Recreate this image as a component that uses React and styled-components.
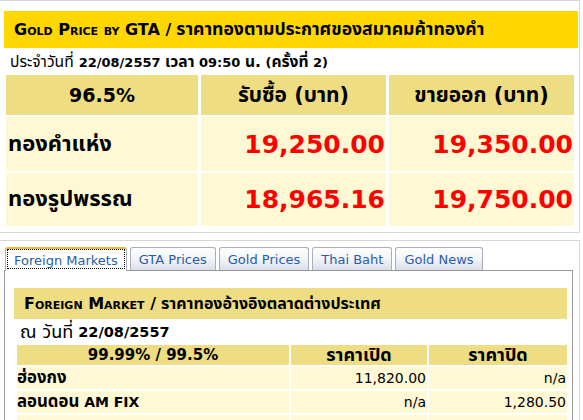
import styled, { createGlobalStyle } from 'styled-components';

const GlobalStyle = createGlobalStyle`
  body {
    margin: 0;
    background: #fff;
    color: #000;
    font-family: Tahoma, "DejaVu Sans", "Noto Sans Thai", "Noto Sans", sans-serif;
    font-size: 13px;
  }
`;

// the Thai fallback face draws small next to the Latin one, so Thai runs get a bump
const Th = styled.span`
  font-size: ${(p) => p.$scale || '1.2em'};
  font-variant: normal;
`;

const Page = styled.div`
  width: 583px;
  height: 420px;
  overflow: hidden;
`;

const Box = styled.div`
  box-sizing: border-box;
  width: 580px;
  height: ${(p) => p.$height};
  border: 1px solid #d6d6d6;
  border-left: none;
  padding: ${(p) => p.$pad};
  margin-top: ${(p) => p.$top || '0'};
`;

const GoldBar = styled.div`
  height: 37px;
  display: flex;
  align-items: center;
  gap: 5px;
  padding-left: 10px;
  margin-right: 1px;
  background: #ffd700;
  font-weight: bold;
  font-size: 16px;
  font-variant: small-caps;
  white-space: pre;
`;

const DateLine = styled.div`
  height: ${(p) => p.$height || '27px'};
  display: flex;
  align-items: center;
  gap: 5px;
  padding-left: 6px;
  font-size: ${(p) => p.$size || '13px'};
  white-space: pre;
`;

const PriceGrid = styled.div`
  display: grid;
  grid-template-columns: 192px 185px 185px;
  grid-template-rows: 40px 54px 53px;
  column-gap: 3px;
  row-gap: 2px;
  margin-left: 2px;
`;

const HeadCell = styled.div`
  display: flex;
  align-items: center;
  justify-content: center;
  background: #eedd82;
  font-weight: bold;
  font-size: 19px;
`;

const LabelCell = styled.div`
  display: flex;
  align-items: center;
  padding-left: 2px;
  background: #fff8d4;
  font-weight: bold;
  font-size: 22px;
`;

const PriceCell = styled.div`
  display: flex;
  align-items: center;
  justify-content: flex-end;
  padding-right: 1px;
  background: #fff8d4;
  color: #f00;
  font-weight: bold;
  font-size: 25px;
`;

const TabRow = styled.div`
  display: flex;
  gap: 3px;
  height: 23px;
  margin-left: 1px;
  position: relative;
  z-index: 1;
`;

const Tab = styled.div`
  box-sizing: border-box;
  height: ${(p) => (p.$active ? '24px' : '23px')};
  padding: 0 8px;
  display: flex;
  align-items: center;
  border: 1px solid #a9afbd;
  border-bottom: none;
  border-top: ${(p) => (p.$active ? '2px solid #f2b53a' : '1px solid #a9afbd')};
  border-radius: 3px 3px 0 0;
  background: ${(p) =>
    p.$active ? '#fff' : 'linear-gradient(#ffffff, #f2f4f8 50%, #d9deea)'};
  color: #2a5caa;
  font-size: 13px;
  outline: ${(p) => (p.$active ? '1px dotted #000' : 'none')};
  outline-offset: -3px;
`;

const Panel = styled.div`
  box-sizing: border-box;
  width: 569px;
  height: 160px;
  border: 1px solid #9a9a9a;
  padding: 17px 0 0 9px;
`;

const PanelBar = styled.div`
  width: 553px;
  height: 31px;
  display: flex;
  align-items: center;
  gap: 5px;
  padding-left: 10px;
  box-sizing: border-box;
  background: #eedd82;
  font-weight: bold;
  font-size: 16px;
  font-variant: small-caps;
  white-space: pre;
`;

const MarketGrid = styled.div`
  display: grid;
  grid-template-columns: 272px 136px 138px;
  grid-template-rows: 20px;
  grid-auto-rows: 22px;
  gap: 2px;
  margin-left: 3px;
  font-size: 14px;
`;

const MarketHead = styled.div`
  display: flex;
  align-items: center;
  justify-content: center;
  background: #eedd82;
  font-weight: bold;
  font-size: 15px;
`;

const MarketCell = styled.div`
  display: flex;
  align-items: center;
  justify-content: ${(p) => (p.$label ? 'flex-start' : 'flex-end')};
  padding-right: ${(p) => (p.$label ? '0' : '1px')};
  background: #fff8d4;
  font-weight: ${(p) => (p.$label ? 'bold' : 'normal')};
  white-space: pre;
`;

const tabs = ['Foreign Markets', 'GTA Prices', 'Gold Prices', 'Thai Baht', 'Gold News'];

const prices = [
  { name: 'ทองคำแห่ง', buy: '19,250.00', sell: '19,350.00' },
  { name: 'ทองรูปพรรณ', buy: '18,965.16', sell: '19,750.00' },
];

const markets = [
  { name: 'ฮ่องกง', open: '11,820.00', close: 'n/a' },
  { name: 'ลอนดอน', extra: ' AM FIX', open: 'n/a', close: '1,280.50' },
  { name: 'ลอนดอน', extra: ' PM FIX', open: 'n/a', close: 'n/a' },
];

function App() {
  return (
    <Page>
      <GlobalStyle />
      <Box $pad="10px 0 0 4px" $height="233px">
        <GoldBar>
          Gold Price by GTA /<Th $scale="1.1em">ราคาทองตามประกาศของสมาคมค้าทองคำ</Th>
        </GoldBar>
        <DateLine>
          <Th>ประจำวันที่</Th>
          <b>
            22/08/2557 <Th>เวลา</Th> 09:50 <Th>น.</Th> (<Th>ครั้งที่</Th> 2)
          </b>
        </DateLine>
        <PriceGrid>
          <HeadCell>96.5%</HeadCell>
          <HeadCell>
            <Th $scale="1.1em">รับซื้อ (บาท)</Th>
          </HeadCell>
          <HeadCell>
            <Th $scale="1.1em">ขายออก (บาท)</Th>
          </HeadCell>
          {prices.map((row) => (
            <>
              <LabelCell key={row.name}>{row.name}</LabelCell>
              <PriceCell>{row.buy}</PriceCell>
              <PriceCell>{row.sell}</PriceCell>
            </>
          ))}
        </PriceGrid>
      </Box>

      <Box $pad="6px 0 0 4px" $top="7px" $height="200px">
        <TabRow>
          {tabs.map((t, i) => (
            <Tab key={t} $active={i === 0}>
              {t}
            </Tab>
          ))}
        </TabRow>
        <Panel>
          <PanelBar>
            Foreign Market /<Th $scale="1em">ราคาทองอ้างอิงตลาดต่างประเทศ</Th>
          </PanelBar>
          <DateLine $size="14.5px" $height="26px">
            <Th $scale="1.25em">ณ วันที่</Th>
            <b>22/08/2557</b>
          </DateLine>
          <MarketGrid>
            <MarketHead>99.99% / 99.5%</MarketHead>
            <MarketHead>
              <Th>ราคาเปิด</Th>
            </MarketHead>
            <MarketHead>
              <Th>ราคาปิด</Th>
            </MarketHead>
            {markets.map((m, i) => (
              <>
                <MarketCell $label key={i}>
                  <Th>{m.name}</Th>
                  {m.extra}
                </MarketCell>
                <MarketCell>{m.open}</MarketCell>
                <MarketCell>{m.close}</MarketCell>
              </>
            ))}
          </MarketGrid>
        </Panel>
      </Box>
    </Page>
  );
}

export default App;
